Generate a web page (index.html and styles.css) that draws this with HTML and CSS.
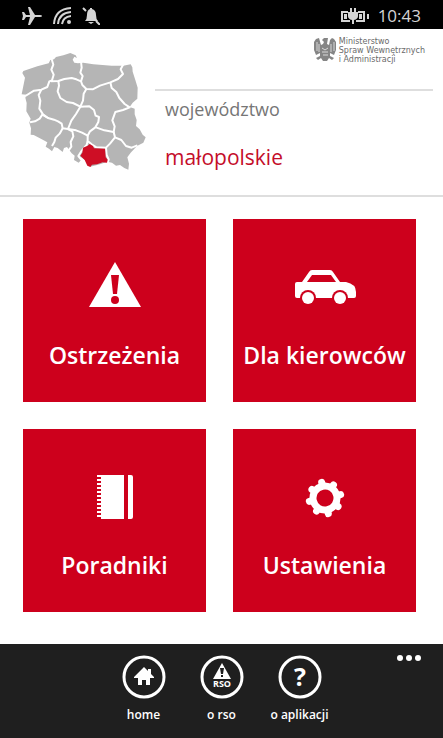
FILE: index.html
```html
<!DOCTYPE html>
<html lang="pl">
<head>
    <meta charset="UTF-8">
    <meta name="viewport" content="width=device-width, initial-scale=1.0">
    <title>RSO</title>
    <link rel="stylesheet" href="styles.css">
</head>
<body>
    <div class="status-bar">
        <div class="status-icons">
            <svg width="20" height="20" viewBox="0 0 20 20" fill="#d4d4d4">
                <path d="M0 6h2l2 3h4L6 1h2l5 8h5q2 0 2 1t-2 1h-5l-5 8H6l2-8H4l-2 3H0l1-4z"/>
            </svg>
            <svg width="18" height="18" viewBox="0 0 18 18" fill="none" stroke="#d4d4d4" stroke-width="2">
                <path d="M1 17Q2 2 18 1M5 17Q6 6 18 5M9 17Q10 10 18 9"/>
                <circle cx="16" cy="15" r="1" fill="#d4d4d4"/>
            </svg>
            <svg width="18" height="18" viewBox="0 0 18 18" fill="#d4d4d4">
                <path d="M8 1h2v1q4 1 4 6 0 4 2 6H3q2-2 2-6 0-5 3-6zM6 15h6l-3 2z"/>
                <path d="M1 1l3 3M14 14l4 4" stroke="#d4d4d4" stroke-width="2"/>
            </svg>
        </div>
        <div class="status-right">
            <svg width="30" height="18" viewBox="0 0 30 18" fill="#d4d4d4">
                <path d="M8 4H1v11h9v-2H3V6h5zM18 4h7v11h-9v-2h7V6h-5zM4 7h3v5H4zM19 7h3v5h-3zM27 7h2v5h-2z"/>
                <path d="M10 1h2v4h2V1h2v4h2v4q0 3-4 4v4h-2v-4q-4-1-4-4V5h2z"/>
            </svg>
            <span class="clock">10:43</span>
        </div>
    </div>

    <header class="header">
        <svg class="map" width="127" height="119" viewBox="30 38 381 357">
            <path fill="#b5b5b5" d="M40 95L82 81L116 72L121 62L132 60L138 53L160 48L181 41L197 48L201 56L193 52L188 61L193 70L204 72L220 70L250 75L305 79L340 79L362 75L367 84L368 97L376 122L383 145L382 178L368 190L359 203L374 208L374 225L380 242L378 260L389 270L398 286L407 294L400 310L381 320L362 340L352 354L357 373L355 391L343 386L330 377L318 379L306 370L292 367L270 375L240 382L226 362L212 353L214 361L206 370L192 362L194 349L185 342L171 323L162 326L158 338L143 326L133 323L126 336L117 328L107 322L112 309L94 299L71 287L62 286L63 267L58 250L62 238L49 216L50 191L46 175L50 166L35 165L45 115L37 101Z"/>
            <g fill="none" stroke="#fff" stroke-width="6" stroke-linejoin="round">
                <path d="M124 56L130 76L124 91L131 106L126 123L118 126L112 143L94 151L72 154L46 170"/>
                <path d="M122 126L145 125L163 119L185 116L199 120L213 126L217 137L229 149L248 150L270 139L301 129L324 119L339 104L332 90L340 75"/>
                <path d="M213 66L215 85L211 100L218 110L213 126"/>
                <path d="M145 125L147 139L143 156L151 176L170 188L189 191L211 202L219 184L221 163L229 149"/>
                <path d="M94 151L86 167L91 184L88 208L99 225L114 236L132 241L144 246L155 253L158 267L174 269L184 244L198 224L211 202"/>
                <path d="M60 249L75 246L89 238L97 226L114 236"/>
                <path d="M158 267L149 283L137 295L133 308L126 320"/>
                <path d="M174 269L187 276L190 291L182 308L184 322L176 333"/>
                <path d="M174 269L198 273L216 280L233 289L240 276L256 264L265 248L267 233L257 229L252 212L238 201L211 202"/>
                <path d="M301 129L305 146L319 158L328 176L344 194L359 204L339 212L316 218L307 243L314 261L311 278L283 273L258 264"/>
                <path d="M311 278L315 294L334 302L348 320L365 325L382 318"/>
                <path d="M315 294L300 313L288 325L259 324L245 315L233 305L233 289"/>
                <path d="M233 305L230 317L213 337L205 350L226 376L240 387M288 325L290 347L296 360L292 372"/>
            </g>
            <path fill="#ce0e25" d="M219 325L233 319L239 314L249 320L252 327L285 328L287 354L293 361L291 370L278 369L261 375L246 376L241 383L232 379L224 362L211 349L217 340Z"/>
        </svg>
        <div class="header-info">
            <div class="ministry">
                <svg width="24" height="26" viewBox="0 0 24 26" fill="#858585">
                    <path d="M11 5L9 3l2-2h4l-1 6 2 1 1-5 2-2 2 1 2 3v8l-2 5-4-2v3l4 2-2 2-3-2-2 3h-4l-2-3-3 2-2-2 4-2v-3l-4 2-2-5V5l2-3 3-1 2 7 2-1z"/>
                    <path d="M4 5v9M6 7v8M18 7v8M21 5v9M9 11l3 2 3-2M9 15h6M10 18h5" stroke="#d9d9d9" fill="none"/>
                </svg>
                <p class="ministry-name">Ministerstwo<br>Spraw Wewnętrznych<br>i Administracji</p>
            </div>
            <div class="region">
                <p class="region-label">województwo</p>
                <p class="region-name">małopolskie</p>
            </div>
        </div>
    </header>

    <main class="tiles">
        <button class="tile">
            <svg width="64" height="52" viewBox="0 0 64 52">
                <path d="M32 3L58 48H6z" fill="#fff"/>
                <path d="M28 16h8l-2 19h-4z" fill="#cd001c"/>
                <circle cx="32" cy="41" r="4" fill="#cd001c"/>
            </svg>
            <span>Ostrzeżenia</span>
        </button>
        <button class="tile">
            <svg width="64" height="52" viewBox="0 0 64 52">
                <path d="M2 25q0-2 2-2h5l7-10q1-2 3-2h18q2 0 3 2l7 10h6q10 2 10 10v4q0 2-2 2H4q-2 0-2-2z" fill="#fff"/>
                <path d="M14 23l5-7h19l5 7z" fill="#cd001c"/>
                <circle cx="15" cy="39" r="8" fill="#cd001c"/>
                <circle cx="47" cy="39" r="8" fill="#cd001c"/>
                <circle cx="15" cy="39" r="6" fill="#fff"/>
                <circle cx="47" cy="39" r="6" fill="#fff"/>
            </svg>
            <span>Dla kierowców</span>
        </button>
        <button class="tile">
            <svg width="64" height="52" viewBox="0 0 64 52" fill="#fff">
                <path d="M18 6h23v44H18zM45 6h3q2 0 2 2v40q0 2-2 2h-3z"/>
                <path d="M16 6v44" stroke="#fff" stroke-width="4" stroke-dasharray="2 2"/>
            </svg>
            <span>Poradniki</span>
        </button>
        <button class="tile">
            <svg width="64" height="52" viewBox="0 0 64 52">
                <g transform="rotate(-12 32 29)" stroke="#fff" stroke-width="7" stroke-linecap="round">
                    <circle cx="32" cy="29" r="12" fill="none"/>
                    <path d="M32 16v-3M32 42v3M19 29h-3M45 29h3M23 20l-2-2M41 20l2-2M23 38l-2 2M41 38l2 2"/>
                </g>
            </svg>
            <span>Ustawienia</span>
        </button>
    </main>

    <nav class="app-bar">
        <div class="app-links">
            <a class="app-link" href="#home">
                <svg width="44" height="44" viewBox="0 0 44 44">
                    <circle cx="22" cy="22" r="20" fill="none" stroke="#fff" stroke-width="3"/>
                    <path d="M22 12l4 4v-2h3v5l3 3v1h-4v7h-4v-5h-4v5h-4v-7h-4v-1z" fill="#fff"/>
                </svg>
                <span>home</span>
            </a>
            <a class="app-link" href="#rso">
                <svg width="44" height="44" viewBox="0 0 44 44">
                    <circle cx="22" cy="22" r="20" fill="none" stroke="#fff" stroke-width="3"/>
                    <path d="M22 8l9 16H13z" fill="#fff"/>
                    <path d="M20 13h4l-1 6h-2zM21 20h2v2h-2z" fill="#1f1f1f"/>
                    <text class="rso-text" x="22" y="32" text-anchor="middle">RSO</text>
                </svg>
                <span>o rso</span>
            </a>
            <a class="app-link" href="#about">
                <svg width="44" height="44" viewBox="0 0 44 44">
                    <circle cx="22" cy="22" r="20" fill="none" stroke="#fff" stroke-width="3"/>
                    <text class="help-text" x="22" y="31" text-anchor="middle">?</text>
                </svg>
                <span>o aplikacji</span>
            </a>
        </div>
        <button class="more" aria-label="Więcej">
            <svg width="24" height="6" viewBox="0 0 24 6" fill="#fff">
                <circle cx="3" cy="3" r="3"/>
                <circle cx="12" cy="3" r="3"/>
                <circle cx="21" cy="3" r="3"/>
            </svg>
        </button>
    </nav>
</body>
</html>
```
FILE: styles.css
```css
* {
    box-sizing: border-box;
}
body {
    margin: 0;
    min-height: 100vh;
    display: flex;
    flex-direction: column;
    background-color: #fff;
    font-family: "Open Sans", "Noto Sans", sans-serif;
}
p {
    margin: 0;
}
svg {
    display: block;
    flex-shrink: 0;
}
.status-bar {
    display: flex;
    justify-content: space-between;
    align-items: center;
    height: 29px;
    padding: 2px 22px 0;
    background-color: #000;
    color: #d4d4d4;
}
.status-icons {
    display: flex;
    align-items: center;
    gap: 11px;
}
.status-right {
    display: flex;
    align-items: center;
    gap: 8px;
}
.clock {
    font-size: 17px;
    line-height: 24px;
}
.header {
    display: flex;
    gap: 8px;
    padding: 8px 10px 24px 20px;
    border-bottom: 2px solid #dedede;
}
.map {
    margin-top: 15px;
}
.header-info {
    flex: 1;
}
.ministry {
    display: flex;
    justify-content: flex-end;
    gap: 2px;
    padding: 0 8px 25px 0;
    border-bottom: 2px solid #dedede;
}
.ministry-name {
    color: #6a6a6a;
    font-family: "DejaVu Sans", sans-serif;
    font-size: 8px;
    line-height: 9px;
}
.region {
    padding: 6px 10px 0;
}
.region-label {
    color: #767676;
    font-size: 18px;
    line-height: 24px;
}
.region-name {
    margin-top: 22px;
    color: #c40d2a;
    font-size: 21px;
    line-height: 28px;
}
.tiles {
    display: grid;
    grid-template-columns: 1fr 1fr;
    gap: 27px;
    padding: 22px 27px 32px 23px;
}
.tile {
    display: flex;
    flex-direction: column;
    align-items: center;
    aspect-ratio: 1;
    padding: 40px 0 0;
    border: 0;
    background-color: #cd001c;
    color: #fff;
    font-family: inherit;
    font-size: 23px;
    font-weight: 600;
    line-height: 32px;
    white-space: nowrap;
    gap: 28px;
}
.app-bar {
    position: relative;
    flex: 1;
    padding: 11px 0;
    background-color: #1f1f1f;
}
.app-links {
    display: flex;
    justify-content: center;
}
.app-link {
    display: flex;
    flex-direction: column;
    align-items: center;
    gap: 7px;
    width: 78px;
    color: #fff;
    font-size: 12px;
    font-weight: 600;
    line-height: 18px;
    text-decoration: none;
}
.rso-text {
    fill: #fff;
    font-size: 9px;
    font-weight: 700;
}
.help-text {
    fill: #fff;
    font-size: 25px;
    font-weight: 700;
}
.more {
    position: absolute;
    top: 11px;
    right: 22px;
    padding: 0;
    border: 0;
    background: none;
}
```
